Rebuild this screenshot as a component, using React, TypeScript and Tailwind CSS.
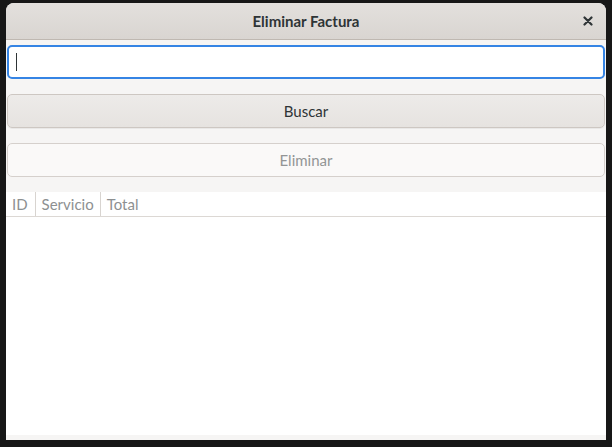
export default function App() {
  return (
    <div
      className="w-[612px] h-[447px] bg-[#171717] pt-[3px] pl-[6px] pr-[6px] pb-[7px]"
      style={{ fontFamily: "Lato, 'Noto Sans', sans-serif" }}
    >
      <div className="h-full flex flex-col bg-[#f6f5f4] rounded-t-[8px] overflow-hidden">
        {/* header bar */}
        <div className="relative h-[37px] shrink-0 flex items-center justify-center bg-gradient-to-b from-[#e3e0dd] to-[#d9d5d1] border-b border-[#bfb8b1]">
          <span className="text-[15px] font-bold text-[#2e3436]">Eliminar Factura</span>
          <button className="absolute right-[10px] top-[10px] w-[16px] h-[16px] flex items-center justify-center text-[#2e3436]">
            <svg width="10" height="10" viewBox="0 0 10 10">
              <path d="M1.5 1.5 L8.5 8.5 M8.5 1.5 L1.5 8.5" stroke="currentColor" strokeWidth="2.2" strokeLinecap="round" />
            </svg>
          </button>
        </div>

        <div className="flex flex-col gap-[15px] px-[1px] pt-[5px]">
          <div className="h-[34px] rounded-[5px] border-2 border-[#3584e4] bg-white flex items-center pl-[7px]">
            <span className="w-[1px] h-[18px] bg-[#2e3436]" />
          </div>
          <button className="h-[34px] rounded-[5px] border border-[#cdc7c2] bg-gradient-to-b from-[#edebe9] to-[#e6e3e0] text-[15px] text-[#2e3436] shadow-[0_1px_0_rgba(0,0,0,0.05)]">
            Buscar
          </button>
          <button className="h-[34px] rounded-[5px] border border-[#d5d0cc] bg-[#faf9f8] text-[15px] text-[#929595]">
            Eliminar
          </button>
        </div>

        <div className="mt-[15px] flex-1 bg-white flex flex-col">
          <div className="h-[25px] flex items-center border-b border-[#dcd8d4] text-[15px] text-[#8d9091]">
            <div className="pl-[6px] pr-[7px] border-r border-[#d8d4d0] h-full flex items-center">ID</div>
            <div className="pl-[6px] pr-[6px] border-r border-[#d8d4d0] h-full flex items-center">Servicio</div>
            <div className="pl-[6px] h-full flex items-center">Total</div>
          </div>
          <div className="flex-1" />
        </div>
        <div className="h-[5px] shrink-0 bg-[#f6f5f4]" />
      </div>
    </div>
  );
}
